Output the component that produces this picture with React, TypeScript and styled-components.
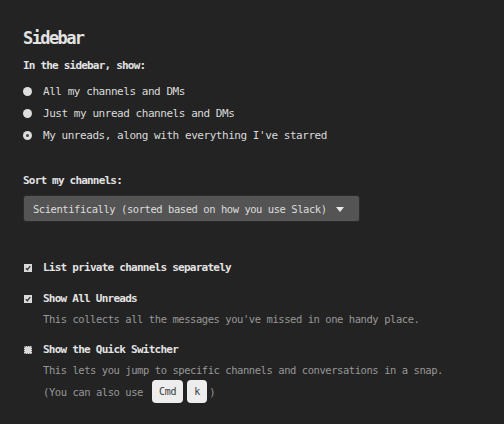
import React from "react";
import styled, { createGlobalStyle } from "styled-components";

const Global = createGlobalStyle`
  html, body { margin: 0; padding: 0; background: #232323; }
  body { font-family: "DejaVu Sans Mono", "Liberation Mono", monospace; }
`;

const Page = styled.div`
  width: 504px;
  min-height: 424px;
  box-sizing: border-box;
  padding: 28px 23px;
  background: #232323;
  color: #dcdcdc;
  display: flex;
  flex-direction: column;
  align-items: flex-start;
  & > * { flex-shrink: 0; }
`;

const Heading = styled.h2`
  margin: 0;
  font-size: 17px;
  line-height: 20px;
  font-weight: bold;
  letter-spacing: -1.6px;
  color: #e2e2e2;
`;

const SubLabel = styled.div<{ $mt: number }>`
  margin-top: ${(p) => p.$mt}px;
  font-size: 11px;
  line-height: 16px;
  font-weight: bold;
  letter-spacing: -0.8px;
  color: #e2e2e2;
`;

const RadioList = styled.div`
  margin-top: 6px;
  display: flex;
  flex-direction: column;
`;

const RadioRow = styled.label`
  display: flex;
  align-items: center;
  height: 22px;
  gap: 11px;
  font-size: 11px;
  letter-spacing: -0.45px;
  color: #dadada;
`;

const Radio = styled.span<{ $checked?: boolean }>`
  width: 9px;
  height: 9px;
  border-radius: 50%;
  background: #dedede;
  box-sizing: border-box;
  display: flex;
  align-items: center;
  justify-content: center;
  &::after {
    content: "";
    width: 3px;
    height: 3px;
    border-radius: 50%;
    background: ${(p) => (p.$checked ? "#444" : "transparent")};
  }
`;

const Select = styled.div`
  margin-top: 6px;
  width: 337px;
  height: 27px;
  box-sizing: border-box;
  background: #545454;
  border: 1px solid #2b2b2b;
  border-radius: 3px;
  display: flex;
  align-items: center;
  padding: 0 0 0 9px;
  gap: 9px;
  font-size: 10.5px;
  letter-spacing: -0.45px;
  color: #dcdcdc;
`;

const Arrow = styled.span`
  width: 0;
  height: 0;
  border-left: 4px solid transparent;
  border-right: 4px solid transparent;
  border-top: 5px solid #e8e8e8;
  margin-top: 1px;
`;

const Options = styled.div`
  margin-top: 36px;
  display: flex;
  flex-direction: column;
  gap: 11px;
`;

const Option = styled.div`
  display: grid;
  grid-template-columns: 9px auto;
  column-gap: 11px;
  align-items: center;
`;

const Check = styled.span<{ $focus?: boolean }>`
  width: 8px;
  height: 8px;
  margin-left: 1px;
  box-sizing: border-box;
  background: #dadada;
  border: ${(p) => (p.$focus ? "1px dotted #7a7a7a" : "none")};
  display: flex;
  align-items: center;
  justify-content: center;
  svg { display: block; }
`;

const OptionLabel = styled.div`
  font-size: 11px;
  line-height: 20px;
  font-weight: bold;
  letter-spacing: -0.75px;
  color: #e2e2e2;
`;

const Desc = styled.div`
  grid-column: 2;
  font-size: 10.5px;
  line-height: 20px;
  letter-spacing: -0.44px;
  color: #979797;
  display: flex;
  align-items: center;
`;

const Kbd = styled.span`
  display: inline-flex;
  align-items: center;
  justify-content: center;
  height: 23px;
  min-width: 20px;
  box-sizing: border-box;
  padding: 0 7px;
  margin-left: 4px;
  background: #ededed;
  color: #3a3a3a;
  border-radius: 4px;
  font-size: 10px;
  letter-spacing: -0.3px;
  &:first-of-type { margin-left: 9px; }
  &:last-of-type { margin-right: 2px; }
`;

const Tick = () => (
  <svg width="6" height="6" viewBox="0 0 6 6">
    <path d="M0.8 3.2 L2.4 4.7 L5.2 1.2" stroke="#333" strokeWidth="1.3" fill="none" />
  </svg>
);

export default function App() {
  return (
    <>
      <Global />
      <Page>
        <Heading>Sidebar</Heading>
        <SubLabel $mt={10}>In the sidebar, show:</SubLabel>
        <RadioList>
          <RadioRow><Radio />All my channels and DMs</RadioRow>
          <RadioRow><Radio />Just my unread channels and DMs</RadioRow>
          <RadioRow><Radio $checked />My unreads, along with everything I've starred</RadioRow>
        </RadioList>
        <SubLabel $mt={27}>Sort my channels:</SubLabel>
        <Select>
          Scientifically (sorted based on how you use Slack)
          <Arrow />
        </Select>
        <Options>
          <Option>
            <Check><Tick /></Check>
            <OptionLabel>List private channels separately</OptionLabel>
          </Option>
          <Option>
            <Check><Tick /></Check>
            <OptionLabel>Show All Unreads</OptionLabel>
            <Desc>This collects all the messages you've missed in one handy place.</Desc>
          </Option>
          <Option>
            <Check $focus />
            <OptionLabel>Show the Quick Switcher</OptionLabel>
            <Desc>This lets you jump to specific channels and conversations in a snap.</Desc>
            <Desc>
              (You can also use<Kbd>Cmd</Kbd><Kbd>k</Kbd>)
            </Desc>
          </Option>
        </Options>
      </Page>
    </>
  );
}
